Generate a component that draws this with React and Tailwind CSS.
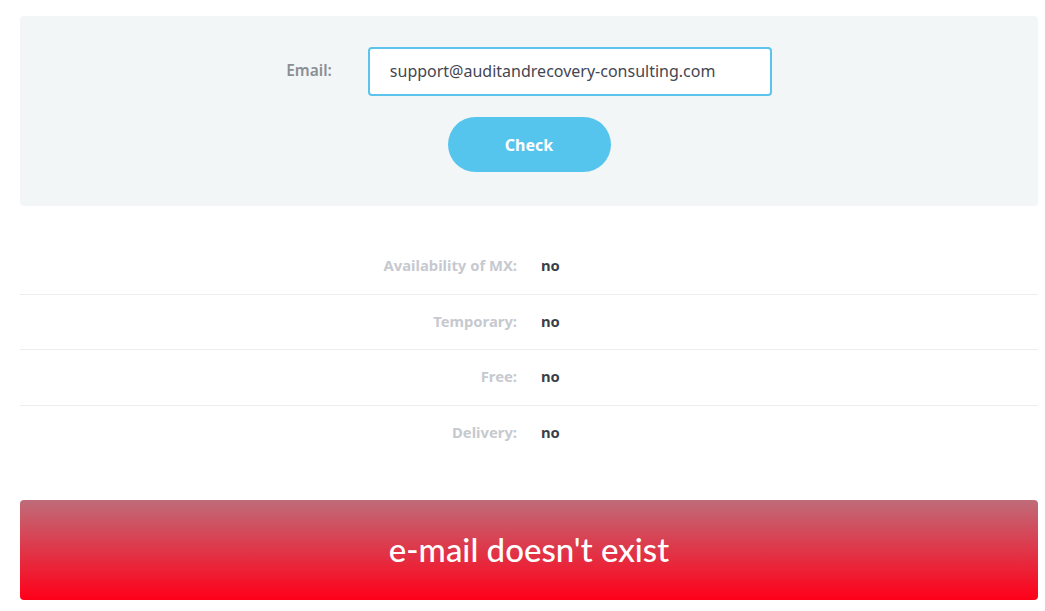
import React from 'react';

const rows = [
  { label: 'Availability of MX:', value: 'no' },
  { label: 'Temporary:', value: 'no' },
  { label: 'Free:', value: 'no' },
  { label: 'Delivery:', value: 'no' },
];

export default function App() {
  return (
    <div className="min-h-screen bg-white pl-5 pr-[7px] pt-4 font-['Noto_Sans',sans-serif]">
      {/* check form */}
      <div className="flex h-[190px] flex-col items-center rounded bg-[#f2f6f7] pt-[31px]">
        <div className="flex items-center gap-9">
          <label className="-mt-0.5 text-[15.5px] font-semibold text-[#8b8e94]">Email:</label>
          <input
            className="h-[49px] w-[404px] rounded border-2 border-[#5bc3ec] bg-white px-5 pb-0.5 text-[16px] text-[#444652] outline-none"
            defaultValue="support@auditandrecovery-consulting.com"
          />
        </div>
        <button className="mt-[21px] h-[55px] w-[163px] rounded-full bg-[#56c5ed] text-[16px] font-bold text-white">
          Check
        </button>
      </div>

      {/* result table */}
      <div className="mt-[33px]">
        {rows.map((r, i) => (
          <div
            key={r.label}
            className={`grid h-[55.5px] grid-cols-2 items-center pb-0.5 ${i < rows.length - 1 ? 'border-b border-[#ebedef]' : ''}`}
          >
            <div className="px-3 text-right text-[14.8px] font-bold text-[#c6c9cf]">{r.label}</div>
            <div className="px-3 text-[14.8px] font-bold text-[#3b3f49]">{r.value}</div>
          </div>
        ))}
      </div>

      {/* verdict */}
      <div className="mt-[39px] flex h-[100px] items-center justify-center rounded bg-linear-to-b/srgb from-[#bf6c79] to-[#ff0019]">
        <span className="font-['Lato',sans-serif] text-[33px] font-medium text-white">e-mail doesn't exist</span>
      </div>
    </div>
  );
}
